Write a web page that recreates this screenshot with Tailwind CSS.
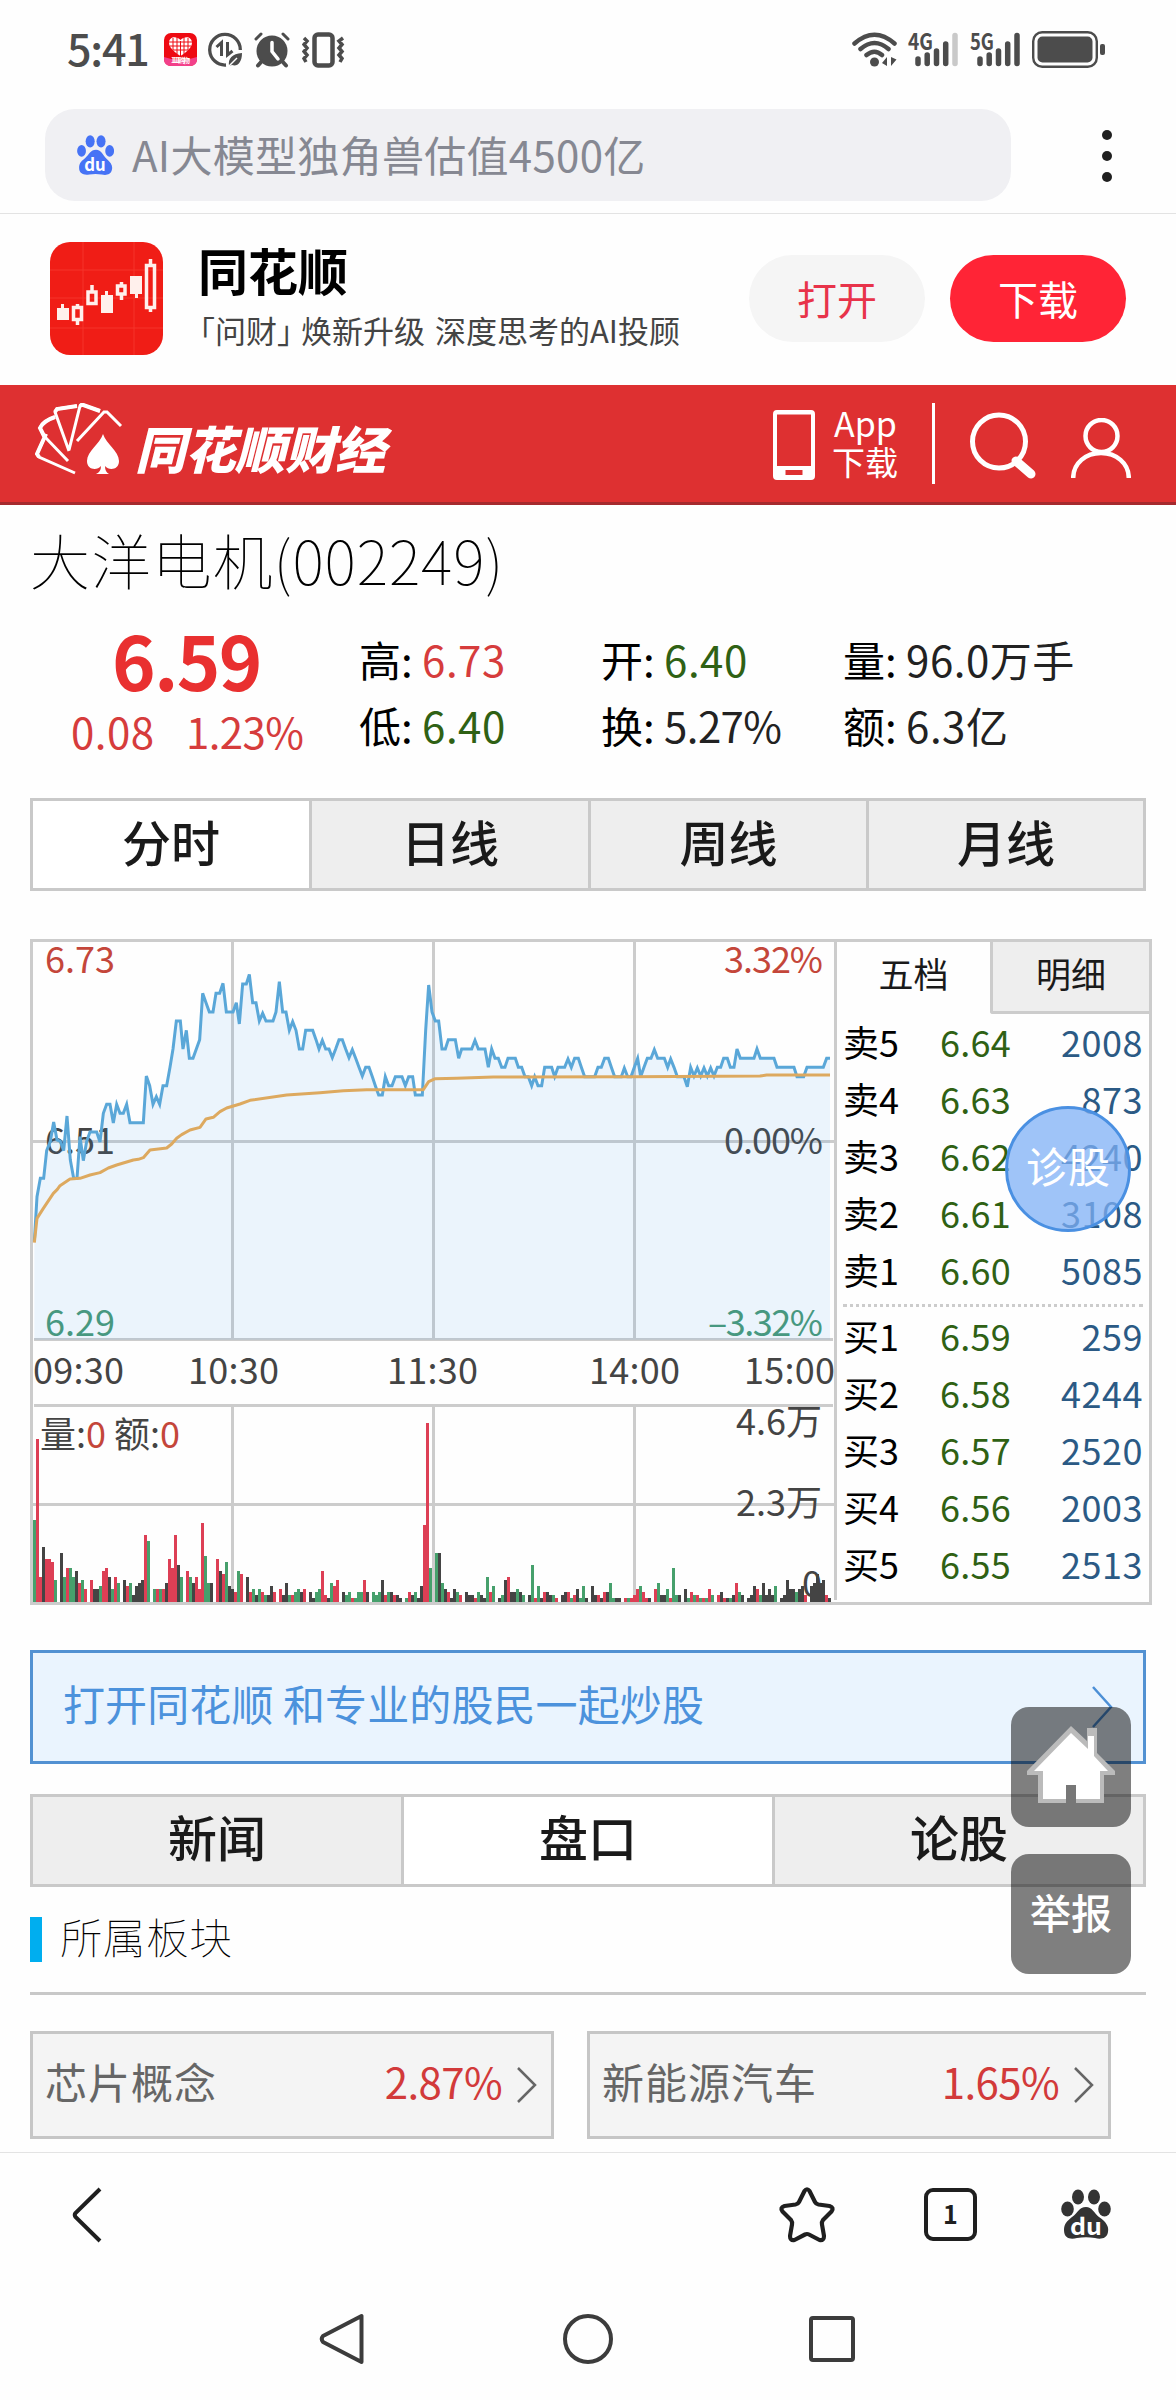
<!DOCTYPE html>
<html lang="zh-CN">
<head>
  <meta charset="UTF-8" />
  <title>大洋电机(002249)</title>
  <meta name="viewport" content="width=device-width, initial-scale=1" />
  <script src="https://cdn.jsdelivr.net/npm/@tailwindcss/browser@4"></script>
</head>
<body class="bg-[#fefefe] font-['Noto_Sans_CJK_SC',sans-serif]">
<div class="relative w-[1176px] h-[2400px] overflow-hidden flex flex-col leading-none text-black">

    <!-- STATUS BAR -------------------------------------------------------- -->
    <div class="h-[109px] shrink-0 flex items-start pt-[28px] pl-[67px] text-[#4c4c4c]">
        <span class="w-[97px] h-[42px] text-[43px] leading-[38px] font-medium tracking-[-1.2px]">5:41</span>
        <svg class="mt-[5px]" width="33" height="33" viewBox="0 0 33 33">
            <rect width="33" height="33" rx="7" fill="#ee0a12"/>
            <path d="M0 24Q16 30 33 24V26Q33 33 26 33H7Q0 33 0 26Z" fill="#f2408a"/>
            <path d="M16.500 23C9 18 5 14 5 9.500C5 4 12 2 16.500 7C21 2 28 4 28 9.500C28 14 24 18 16.500 23Z" fill="#fff"/>
            <path d="M9 5V17M13 4V21M16.500 8V23M20 4V21M24 5V17M5 9H28M6 13H27M9 17H24" stroke="#ee0a12" stroke-width="1"/>
            <text x="7" y="30" font-size="7" font-weight="700" fill="#fff" textLength="19">11.11购物</text>
        </svg>
        <svg class="ml-[11px] mt-[4px]" width="35" height="36" viewBox="0 0 35 36" fill="none" stroke="#4c4c4c" stroke-width="3.300">
            <path d="M18 33A15.300 15.300 0 1 1 32.300 18"/>
            <path d="M8.500 15L13.500 10.500V24M19.500 10V23L24.500 19" stroke-width="3"/>
            <path d="M21 34C20 26 24 22 34 21C34 31 29 35 24 33Z" fill="#4c4c4c" stroke="none"/>
            <path d="M20 35L29 26" stroke="#fefefe" stroke-width="1.500"/>
        </svg>
        <svg class="ml-[11px] mt-[4px]" width="36" height="36" viewBox="0 0 36 36" fill="none" stroke="#4c4c4c" stroke-linecap="round">
            <circle cx="18" cy="19" r="15.500" fill="#4c4c4c" stroke="none"/>
            <path d="M2 7L7 2M34 7L29 2" stroke-width="3"/>
            <path d="M8 29L4 33.500M28 29L32 33.500" stroke-width="4"/>
            <path d="M18 10.500V19.500L24 27" stroke="#fff" stroke-width="3.500"/>
        </svg>
        <svg class="ml-[12px] mt-[4px]" width="43" height="36" viewBox="0 0 43 36" fill="none" stroke="#4c4c4c">
            <rect x="12.500" y="2.500" width="18" height="31" rx="3.500" stroke-width="4.500"/>
            <path d="M2 6L5 9L2 12.500L5 16L2 19.500L5 23L2 26.500L4 30M41 6L37 9L40 12.500L37 16L40 19.500L37 23L40 26.500L38 30" stroke-width="3.500"/>
        </svg>
        <svg class="ml-[507px] mt-[4px]" width="45" height="36" viewBox="0 0 45 36" fill="none" stroke="#4c4c4c" stroke-width="4.500" stroke-linecap="round">
            <path d="M2.500 11.500Q22.500 -6 42.500 11.500M8.500 17Q22.500 5 36.500 17M14.500 23Q22.500 16.500 30 23"/>
            <circle cx="22.500" cy="30" r="4.500" fill="#4c4c4c" stroke="none"/>
            <path d="M35 25V34L30 31ZM39 25V34L44.500 27.500Z" fill="#4c4c4c" stroke="none"/>
        </svg>
        <svg class="ml-[11px] mt-[4px] overflow-visible" width="51" height="36" viewBox="0 0 51 36" stroke="#4c4c4c" stroke-width="5.500" stroke-linecap="round">
            <text x="0" y="18" font-size="23" font-weight="700" fill="#4c4c4c" stroke="none" textLength="25" lengthAdjust="spacingAndGlyphs">4G</text>
            <path d="M10 27V31.500M19.200 23V31.500M28.500 19V31.500M37.700 12V31.500"/>
            <path d="M47 3.500V31.500" stroke="#c9c9c9"/>
        </svg>
        <svg class="ml-[11px] mt-[4px] overflow-visible" width="51" height="36" viewBox="0 0 51 36" stroke="#4c4c4c" stroke-width="5.500" stroke-linecap="round">
            <text x="0" y="18" font-size="23" font-weight="700" fill="#4c4c4c" stroke="none" textLength="24" lengthAdjust="spacingAndGlyphs">5G</text>
            <path d="M10 27V31.500M19.200 23V31.500M28.500 19V31.500M37.700 12V31.500M47 3.500V31.500"/>
        </svg>
        <svg class="ml-[11px] mt-[3px]" width="74" height="37" viewBox="0 0 74 37">
            <rect x="1.200" y="1.200" width="63.600" height="34.600" rx="9" fill="none" stroke="#4c4c4c" stroke-width="2.400"/>
            <rect x="5.500" y="5.500" width="55" height="26" rx="5" fill="#4c4c4c"/>
            <rect x="68" y="13" width="5" height="11" rx="2" fill="#4c4c4c"/>
        </svg>
    </div>

    <!-- SEARCH BAR -------------------------------------------------------- -->
    <div class="h-[105px] shrink-0 flex items-start pl-[45px] border-b border-[#e3e3e3]">
        <div class="w-[966px] h-[92px] rounded-[30px] bg-[#f0f0f3] flex items-center pl-[32px]">
            <svg width="37" height="40" viewBox="0 0 36 39" fill="#4673f5">
                <ellipse cx="4.400" cy="15.500" rx="4.300" ry="5.800"/>
                <ellipse cx="12.800" cy="6.200" rx="4.400" ry="6"/>
                <ellipse cx="23.400" cy="6.200" rx="4.400" ry="6"/>
                <ellipse cx="31.800" cy="15.500" rx="4.300" ry="5.800"/>
                <path d="M18.500 14.500C24 14.500 25 20 29 23.500C33 27 35 30 34 34C33 39 28 39.500 24 38.500Q18 37.500 12 38.500C7 39.500 2 38 2 32C2 27 5 25 8 22.500C12 19 13 14.500 18.500 14.500Z"/>
                <text x="7" y="35.500" font-size="17" font-weight="700" fill="#fff" textLength="21" lengthAdjust="spacingAndGlyphs">du</text>
            </svg>
            <span class="ml-[18px] pb-[2px] text-[42px] tracking-[0.3px] text-[#868892] whitespace-nowrap">AI大模型独角兽估值4500亿</span>
        </div>
        <div class="ml-[91px] mt-[21px] flex flex-col gap-[11px]">
            <i class="size-[10px] rounded-full bg-[#1f1f1f]"></i>
            <i class="size-[10px] rounded-full bg-[#1f1f1f]"></i>
            <i class="size-[10px] rounded-full bg-[#1f1f1f]"></i>
        </div>
    </div>

    <!-- APP BANNER -------------------------------------------------------- -->
    <div class="h-[171px] shrink-0 flex items-start pl-[50px]">
        <svg class="mt-[28px]" width="113" height="113" viewBox="0 0 113 113">
            <rect width="113" height="113" rx="20" fill="#f01d16"/>
            <path d="M0 28H113M0 56H113M0 86H113M33 0V113M84 0V113" stroke="#f5352b" stroke-width="1"/>
            <g fill="#fff0ec">
                <path d="M7 66H11V62H14V66H19V78H7Z"/>
                <path d="M51 53H55V49H58V53H63V71H51Z"/>
                <path d="M80 34H92V52H88V56H85V52H80Z"/>
            </g>
            <g fill="none" stroke="#fff0ec" stroke-width="3.500">
                <path d="M23.500 65.500H31.500V77.500H23.500ZM27.500 62V66M27.500 78V83"/>
                <path d="M38 50H46V61.500H38ZM42 43V50"/>
                <path d="M67.500 44H75V52H67.500ZM71.500 40V44M71.500 52V58"/>
                <path d="M96.500 23.500H104.500V65.500H96.500ZM100.500 17V24M100.500 66V70"/>
            </g>
        </svg>
        <div class="ml-[35px] w-[551px] pt-[30px]">
            <div class="text-[50px] font-bold">同花顺</div>
            <div class="-ml-[14px] mt-[20px] text-[31px] text-[#444] whitespace-nowrap">「问财」<span class="-ml-[7px]">焕新升级</span> <span class="ml-[3px]">深度思考的AI投顾</span></div>
        </div>
        <button class="mt-[41px] w-[176px] h-[87px] rounded-full bg-[#f5f5f5] text-[#e8334a] text-[40px] pb-[2px]">打开</button>
        <button class="ml-[25px] mt-[41px] w-[176px] h-[87px] rounded-full bg-[#ff2436] text-white text-[40px] pb-[2px]">下载</button>
    </div>

    <!-- SITE HEADER ------------------------------------------------------- -->
    <div class="h-[120px] shrink-0 flex items-start pl-[35px] bg-[#de3031] border-b-[3px] border-[#a52a2e] text-white">
        <svg class="mt-[18px]" width="88" height="72" viewBox="0 0 88 72" fill="none" stroke="#fff" stroke-width="3">
            <path d="M40 70L4 54L2 51L11 31M33 58L9 33L5 25Q8 18 20 14M34 48L20 9L22 6L42 3M34 47L45 3L47 1.500L65 8M42 38L69 9L72 9L86 23"/>
            <path d="M4 54L2 51L11 31M9 33L5 25Q8 18 20 14M20 9L22 6L42 3M45 3L47 1.500L65 8" stroke-width="4"/>
            <path d="M68 31C71 41 84 48 84 58C84 67 74 68 70 63Q70 69 74 71H61Q66 69 66 63C62 68 52 67 52 58C52 48 65 41 68 31Z" fill="#fff" stroke="none"/>
        </svg>
        <div class="ml-[12px] mt-[37px] w-[638px] text-[50.500px] tracking-[-0.500px] font-black italic whitespace-nowrap">同花顺财经</div>
        <svg class="mt-[25px]" width="42" height="70" viewBox="0 0 42 70">
            <path fill="#fff" fill-rule="evenodd" d="M4 0H38Q42 0 42 4V66Q42 70 38 70H4Q0 70 0 66V4Q0 0 4 0ZM4 4.500V56H38V4.500ZM12.500 60V65H29.500V60Z"/>
        </svg>
        <div class="ml-[17px] mt-[18px] w-[66px] text-[33px] leading-[39px]">
            <div class="text-[34px] pl-[2px]">App</div>
            <div>下载</div>
        </div>
        <div class="ml-[34px] mt-[18px] w-[3px] h-[81px] bg-white"></div>
        <svg class="ml-[35px] mt-[27px]" width="68" height="70" viewBox="0 0 68 70" fill="none" stroke="#fff">
            <circle cx="29" cy="29.500" r="26.500" stroke-width="5"/>
            <path d="M46 49L61 62" stroke-width="9" stroke-linecap="round"/>
        </svg>
        <svg class="ml-[33px] mt-[33px]" width="60" height="60" viewBox="0 0 60 60" fill="none" stroke="#fff" stroke-width="4.500">
            <circle cx="30.500" cy="18" r="16"/>
            <path d="M2.200 60C2.200 45 15 35 30 35S57.800 45 57.800 60"/>
        </svg>
    </div>

    <!-- QUOTE ------------------------------------------------------------- -->
    <h1 class="h-[113px] shrink-0 pl-[30px] pt-[24px] text-[60px] font-thin tracking-[0.9px]">大洋电机(002249)</h1>
    <div class="h-[180px] shrink-0 grid grid-cols-[359px_242px_242px_333px] text-[42px] leading-[66px]">
        <div class="pt-[1px] text-[#d63c3c]">
            <div class="pl-[112px] text-[74px] leading-[80px] font-bold text-[#e93030] tracking-[-1.500px]">6.59</div>
            <div class="pl-[71px] -mt-[1px] flex"><span class="w-[115px] tracking-[0.500px]">0.08</span><span class="tracking-[-0.600px]">1.23%</span></div>
        </div>
        <div class="pt-[8px]">
            <div>高: <span class="text-[#d63c3c] tracking-[0.500px]">6.73</span></div>
            <div>低: <span class="text-[#2f6114] tracking-[0.500px]">6.40</span></div>
        </div>
        <div class="pt-[8px]">
            <div>开: <span class="text-[#2f6114] tracking-[0.500px]">6.40</span></div>
            <div>换: <span class="text-[#222] tracking-[-0.600px]">5.27%</span></div>
        </div>
        <div class="pt-[8px]">
            <div>量: <span class="text-[#222] tracking-[0.500px]">96.0万手</span></div>
            <div>额: <span class="text-[#222] tracking-[0.500px]">6.3亿</span></div>
        </div>
    </div>

    <!-- PERIOD TABS ------------------------------------------------------- -->
    <div class="mx-[30px] h-[93px] shrink-0 grid grid-cols-[279px_279px_278px_1fr] divide-x-[3px] divide-[#c9c9c9] border-[3px] border-[#c9c9c9] bg-[#eee] text-[49px] leading-[79px] font-medium text-center text-[#1a1a1a]">
        <div class="bg-white">分时</div>
        <div>日线</div>
        <div>周线</div>
        <div>月线</div>
    </div>

    <!-- CHART + ORDER BOOK ------------------------------------------------ -->
    <div class="ml-[30px] mt-[48px] w-[1122px] h-[666px] shrink-0 flex">
        <svg class="shrink-0" width="807" height="666" viewBox="0 0 807 666" font-size="36" fill="#444">
            <g fill="none" stroke="#ccc" stroke-width="3">
                <path d="M1.500 0V666M0 1.500H807M805.500 0V661M0 664.500H807"/>
                <path d="M202.500 3V401M403.500 3V401M604.500 3V401M3 202.500H804M4 400.500H803"/>
                <path d="M4 466.500H803M3 565.500H804M202.500 467V663M403.500 467V663M604.500 467V663"/>
            </g>
            <g fill="#444">
                <text x="15" y="34" fill="#c4463a" textLength="70">6.73</text>
                <text x="15" y="215" textLength="70">6.51</text>
                <text x="15" y="397" fill="#489874" textLength="70">6.29</text>
                <text x="793" y="34" fill="#c4463a" text-anchor="end" textLength="99">3.32%</text>
                <text x="793" y="215" text-anchor="end" textLength="99">0.00%</text>
                <text x="793" y="397" fill="#489874" text-anchor="end" textLength="115">–3.32%</text>
                <text x="3" y="445" textLength="91">09:30</text>
                <text x="158" y="445" textLength="91">10:30</text>
                <text x="357" y="445" textLength="91">11:30</text>
                <text x="559" y="445" textLength="91">14:00</text>
                <text x="805" y="445" text-anchor="end" textLength="91">15:00</text>
                <text x="792" y="496" text-anchor="end">4.6万</text>
                <text x="792" y="577" text-anchor="end">2.3万</text>
                <text x="792" y="658" text-anchor="end">0</text>
            </g>
            <g transform="translate(-30 -19) scale(.33333)" fill="none" stroke-width="9">
                <path id="area" fill="#419beb" fill-opacity=".1"/>
                <polyline id="price" stroke="#5aa7d8" points="103,965 111,830 121,775 131,775 140,692 151,664 161,606 171,660 181,664 191,692 201,588 211,720 221,775 231,775 240,650 250,722 260,664 270,636 290,636 300,666 310,580 320,553 330,553 340,609 350,553 360,580 370,580 380,553 390,608 430,608 439,468 449,497 459,553 469,530 479,553 489,497 500,497 510,442 519,387 529,303 541,303 549,387 559,331 568,415 579,415 589,387 599,359 608,220 618,248 628,276 639,276 648,220 659,220 669,190 679,276 699,276 709,248 718,312 728,192 739,192 748,163 758,248 768,248 778,303 788,280 798,303 819,303 828,276 838,185 848,276 858,276 868,331 878,305 888,331 898,387 908,387 917,331 938,331 948,359 957,387 967,361 977,387 987,387 997,413 1007,387 1017,359 1027,359 1037,387 1047,413 1057,389 1067,415 1077,442 1087,468 1097,442 1107,442 1117,470 1126,497 1136,525 1147,525 1156,470 1166,497 1176,497 1186,470 1206,470 1216,497 1226,470 1238,470 1246,525 1267,525 1277,331 1286,195 1296,276 1306,303 1316,303 1326,387 1336,387 1345,359 1366,359 1376,415 1385,387 1415,387 1425,361 1435,387 1455,387 1465,442 1475,387 1485,415 1495,415 1505,442 1515,442 1524,415 1546,415 1555,442 1565,442 1575,470 1585,470 1595,497 1604,470 1614,497 1625,497 1634,442 1655,442 1664,470 1674,442 1694,442 1704,417 1714,442 1724,415 1735,415 1744,442 1754,470 1784,470 1794,442 1804,442 1814,415 1825,415 1834,442 1844,470 1864,470 1873,444 1883,470 1893,470 1903,442 1913,415 1922,470 1932,442 1942,415 1953,415 1963,389 1973,415 1993,415 2003,442 2012,417 2022,442 2032,470 2052,470 2062,500 2072,442 2082,468 2092,444 2102,468 2112,444 2122,468 2132,444 2142,468 2152,442 2162,442 2171,415 2182,415 2191,442 2202,442 2211,387 2221,415 2262,415 2271,387 2281,415 2322,415 2331,442 2382,442 2391,470 2411,470 2421,442 2470,442 2480,415 2490,415"/>
                <polyline stroke="#dda95f" stroke-linejoin="round" points="103,968 111,895 130,865 160,820 172,808 180,797 210,777 240,775 270,765 300,758 325,744 350,735 400,720 415,718 430,713 450,690 500,684 515,672 530,655 545,644 570,630 600,622 618,597 640,592 660,575 680,564 720,552 750,541 860,525 960,518 1030,512 1100,509 1270,509 1286,485 1306,476 1370,475 1480,471 1900,470 2280,468 2300,465 2490,465"/>
            </g>
            <g id="volume"></g>
            <text x="10" y="509" textLength="140">量:<tspan fill="#c4463a">0</tspan> 额:<tspan fill="#c4463a">0</tspan></text>
        </svg>

        <div class="w-[315px] h-[666px] border-y-[3px] border-r-[3px] border-[#ccc] text-[36px]">
            <div class="h-[72px] flex text-[35px] leading-[62px] text-center text-[#1a1a1a]">
                <div class="w-[153px]">五档</div>
                <div class="w-[159px] border-l-[3px] border-b-[3px] border-[#ccc] rounded-bl-[3px] bg-[#eee]">明细</div>
            </div>
            <div id="asks"></div>
            <div class="mx-[6px] mt-[5px] mb-[1px] border-t-[3px] border-dotted border-[#ccc]"></div>
            <div id="bids"></div>
        </div>
    </div>

    <!-- OPEN-APP BANNER --------------------------------------------------- -->
    <div class="mx-[30px] mt-[45px] h-[114px] shrink-0 flex items-center justify-between border-[3px] border-[#5291d2] bg-[#eaf4fe] pl-[30px] pr-[30px] text-[42px] text-[#4c92dc]">
        <span class="pb-[9px] tracking-[0.100px]">打开同花顺 和专业的股民一起炒股</span>
        <svg width="22" height="42" viewBox="0 0 22 42" fill="none" stroke="#4c8fd6" stroke-width="2.500"><path d="M2 1L20 21L2 41"/></svg>
    </div>

    <!-- CONTENT TABS ------------------------------------------------------ -->
    <div class="mx-[30px] mt-[30px] h-[93px] shrink-0 grid grid-cols-[371px_371px_1fr] divide-x-[3px] divide-[#c9c9c9] border-[3px] border-[#c9c9c9] bg-[#eee] text-[49px] leading-[77px] font-medium text-center text-[#1a1a1a]">
        <div>新闻</div>
        <div class="bg-white">盘口</div>
        <div>论股</div>
    </div>

    <!-- SECTORS ----------------------------------------------------------- -->
    <div class="mx-[30px] h-[108px] shrink-0 flex items-start pt-[30px] border-b-[3px] border-[#c8c8c8]">
        <i class="w-[12px] h-[45px] bg-[#00aeef]"></i>
        <h2 class="ml-[18px] text-[42.500px] leading-[37px] font-thin tracking-[0.600px]">所属板块</h2>
    </div>
    <div class="mt-[36px] ml-[30px] flex gap-[33px] text-[42px] text-[#666]">
        <div class="w-[524px] h-[108px] flex items-center border-[3px] border-[#c6c6c6] bg-[#f4f4f4] pl-[12px] pr-[14px] pb-[9px]">
            <span class="tracking-[1px]">芯片概念</span>
            <span class="ml-auto text-[#d23a3a] tracking-[-0.600px]">2.87%</span>
            <svg class="ml-[14px] mt-[8px]" width="21" height="36" viewBox="0 0 21 36" fill="none" stroke="#666" stroke-width="2.500"><path d="M2 1L19 18L2 35"/></svg>
        </div>
        <div class="w-[524px] h-[108px] flex items-center border-[3px] border-[#c6c6c6] bg-[#f4f4f4] pl-[12px] pr-[14px] pb-[9px]">
            <span class="tracking-[1px]">新能源汽车</span>
            <span class="ml-auto text-[#d23a3a] tracking-[-0.600px]">1.65%</span>
            <svg class="ml-[14px] mt-[8px]" width="21" height="36" viewBox="0 0 21 36" fill="none" stroke="#666" stroke-width="2.500"><path d="M2 1L19 18L2 35"/></svg>
        </div>
    </div>

    <!-- BROWSER TOOLBAR --------------------------------------------------- -->
    <div class="mt-[13px] h-[134px] shrink-0 flex items-start pt-[34px] pl-[71px] border-t border-[#e3e3e3]">
        <svg width="32" height="56" viewBox="0 0 32 56" fill="none" stroke="#1f1f1f" stroke-width="4"><path d="M29 2L4.500 26Q3 28 4.500 30L29 54"/></svg>
        <svg class="ml-[675px]" width="58" height="56" viewBox="0 0 58 56" fill="none" stroke="#1f1f1f" stroke-width="4.200" stroke-linejoin="round">
            <path d="M26.500 4Q29 0.500 31.500 4L37 15Q38 17 40.500 17.500L51.500 19Q56.500 20.500 53.500 24.500L45 33Q43.500 35 44 37.500L46 49Q46 54 41.500 53L31 47.500Q29 46.500 27 47.500L16.500 53Q12 54 12 49L14 37.500Q14.500 35 13 33L4.500 24.500Q1.500 20.500 6.500 19L17.500 17.500Q20 17 21 15Z"/>
        </svg>
        <div class="ml-[88px] mt-[1px] size-[53px] rounded-[9px] border-[4.500px] border-[#1f1f1f] text-center text-[25px] leading-[42px] font-bold text-[#1f1f1f]">1</div>
        <svg class="ml-[84px] mt-[2px]" width="50" height="51" viewBox="0 0 50 51" fill="#333">
            <ellipse cx="6.500" cy="20" rx="6.300" ry="7.500"/>
            <ellipse cx="17" cy="8" rx="6" ry="7.500"/>
            <ellipse cx="33" cy="8" rx="6" ry="7.500"/>
            <ellipse cx="43.500" cy="20" rx="6.300" ry="7.500"/>
            <path d="M25 18C31 18 33 24 38 28C45 33 48 37 47 43C46 50 39 50.500 34 49Q25 47.500 16 49C10 50.500 3 50 3 41C3 35 6 32 11 28C17 24 18 18 25 18Z"/>
            <text x="9" y="45.500" font-size="23" font-weight="700" fill="#fff" textLength="32" lengthAdjust="spacingAndGlyphs">du</text>
        </svg>
    </div>

    <!-- SYSTEM NAVIGATION ------------------------------------------------- -->
    <div class="flex items-center h-[106px] pl-[318px]">
        <svg width="48" height="54" viewBox="0 0 48 54" fill="none" stroke="#3c3c3c" stroke-width="4" stroke-linejoin="round"><path d="M43.500 4V50L5 30Q2.500 27 5 24Z"/></svg>
        <svg class="ml-[197px]" width="50" height="50" viewBox="0 0 50 50" fill="none" stroke="#3c3c3c" stroke-width="4"><circle cx="25" cy="25" r="23"/></svg>
        <div class="ml-[196px] w-[46px] h-[46px] rounded-[4px] border-4 border-[#3c3c3c]"></div>
    </div>

    <!-- FLOATING BUTTONS -------------------------------------------------- -->
    <div class="absolute left-[1005px] top-[1106px] size-[126px] rounded-full border-[3px] border-[#4a90e2] bg-[#7fb0f5]/75 text-white text-[42px] leading-[112px] text-center">诊股</div>
    <div class="absolute left-[1011px] top-[1707px] size-[120px] rounded-[18px] bg-black/50">
        <svg class="absolute left-[15px] top-[18px]" width="90" height="80" viewBox="0 0 90 80">
            <path d="M45 1L61 16V3H71V28L89 46V50H78V78H12V50H1V46Z" fill="#bbb"/>
            <path d="M45 8L62 24V11H68V31L82 46H74V74H50V60H40V74H17V46H8Z" fill="#fff"/>
            <path d="M40 60H50V79H40Z" fill="#777"/>
        </svg>
    </div>
    <div class="absolute left-[1011px] top-[1854px] size-[120px] rounded-[18px] bg-black/50 text-white text-[41px] font-medium leading-[114px] text-center">举报</div>
</div>

<script>
    /* ─── Price area: close the price line along the bottom axis ─── */
    const pts = document.getElementById('price').getAttribute('points');
    document.getElementById('area').setAttribute('d', 'M103,1259 L' + pts + ' L2490,1259 Z');

    /* ─── Volume bars: colour + height, "-" is an empty slot ─── */
    const bars = `g82 r163 r25 k55 r43 r43 r40 g22 - k49 g25 r34 g34 g25 k31 r19 g22 r13 - r22 k13 k13 g16 r31 r34 k25 g13 r25 g19 -
        k22 r16 g19 k7 k16 k19 k22 r67 g61 - g13 r13 g13 r13 k19 r43 r34 r67 k37 g25 - r31 g25 k19 r25 r13 r79 g46 g19 k19 -
        r43 k31 r28 g40 k16 k13 r10 g31 r28 - k25 r10 g13 k7 g13 r10 g7 k7 k16 r10 - r13 k7 k19 g7 r7 g10 g13 k10 r13 -
        k10 k4 g10 g13 r31 r7 k4 g19 r16 r22 - k10 g7 g10 r4 g4 g10 g10 r22 k10 - g10 g7 g10 k22 r7 g10 k10 r7 k7 k4 -
        g4 r10 k7 g10 k4 k16 r77 r179 g34 - g49 k49 g19 k13 r10 k4 k13 g10 r7 - k10 k7 k7 r4 g10 k7 k4 g25 r10 g16 -
        k4 g7 k22 r25 k10 k10 g13 k10 g7 - k7 g37 r4 g16 k4 r10 k10 k7 g7 r4 - k7 k10 r10 g4 r7 k13 g4 g16 k4 -
        k16 k7 r7 k4 r10 k10 g19 g4 k4 k4 - r4 g4 r4 r7 r13 g16 r10 r4 k4 - r13 g19 k7 k7 g13 r4 g34 g7 k7 -
        k13 g4 r10 g7 r7 g4 r4 g4 r13 g7 - r7 k10 r4 k4 g4 k7 r19 g10 k7 - k4 k7 k16 r13 g7 k19 k7 k13 k7 g16 -
        k4 k7 k22 k13 k13 g10 k13 k16 r7 - k16 k19 k28 k19 k22 r7 k4`.split(/\s+/);
    const fills = { r: '#dd3f55', g: '#46a06c', k: '#444' };
    document.getElementById('volume').innerHTML = bars.map((b, i) => {
        const h = Number(b.slice(1));
        return h ? `<rect x="${3 + i * 3}" y="${663 - h}" width="3" height="${h}" fill="${fills[b[0]]}"/>` : '';
    }).join('');

    /* ─── Order book ─── */
    const row = ([name, price, qty]) => `
        <div class="h-[57px] flex leading-[55px] pl-[6px] pr-[6px]">
            <span class="w-[97px]">${name}</span>
            <span class="text-[#2f6114] tracking-[0.3px]">${price}</span>
            <span class="ml-auto text-[#2b5a85] tracking-[0.5px]">${qty}</span>
        </div>`;
    const asks = [['卖5', '6.64', 2008], ['卖4', '6.63', 873], ['卖3', '6.62', 4240], ['卖2', '6.61', 3108], ['卖1', '6.60', 5085]];
    const bids = [['买1', '6.59', 259], ['买2', '6.58', 4244], ['买3', '6.57', 2520], ['买4', '6.56', 2003], ['买5', '6.55', 2513]];
    document.getElementById('asks').innerHTML = asks.map(row).join('');
    document.getElementById('bids').innerHTML = bids.map(row).join('');
</script>
</body>
</html>
